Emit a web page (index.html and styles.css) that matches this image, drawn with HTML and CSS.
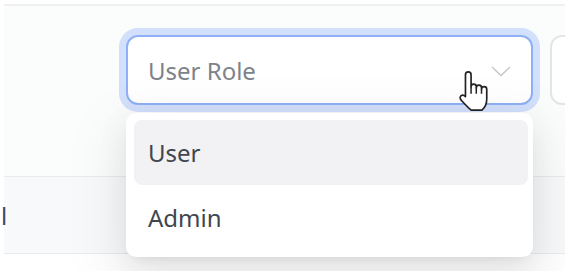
FILE: index.html
```html
<!DOCTYPE html>
<html lang="en">
<head>
    <meta charset="UTF-8">
    <meta name="viewport" content="width=device-width, initial-scale=1.0">
    <title>Users - Filter</title>
    <link rel="stylesheet" href="styles.css">
</head>
<body>
    <div class="page">
        <div class="toolbar">
            <div class="select-wrap">
                <div class="select focused">
                    <span class="placeholder">User Role</span>
                    <svg class="chevron" width="20" height="11" viewBox="0 0 20 11">
                        <path d="M1 1 L10 9.5 L19 1" fill="none" stroke="#c3c6cc" stroke-width="1.4"/>
                    </svg>
                </div>
                <div class="dropdown">
                    <div class="option active">User</div>
                    <div class="option">Admin</div>
                </div>
                <svg class="cursor" width="34" height="42" viewBox="0 0 18 22.5">
                    <path d="M5.5 11.2 V2 a1.5 1.5 0 0 1 3 0 V8.4 a1.4 1.4 0 0 1 2.8 0 V9 a1.4 1.4 0 0 1 2.8 0 V9.8 a1.4 1.4 0 0 1 2.8 0 V15 c0 2.8 -1.2 4.8 -2.6 6 H8.6 c-1.6 -1.2 -3.2 -3 -5.4 -5.4 c-0.8 -0.9 -0.7 -2 0.1 -2.5 c0.8 -0.4 1.6 0 2.2 0.6 Z" fill="#fff" stroke="#222" stroke-width="0.9" stroke-linejoin="round"/>
                    <path d="M8.5 8.4 V12.2 M11.3 9 V12.2 M14.1 9.8 V12.2" stroke="#222" stroke-width="0.8"/>
                </svg>
            </div>
            <div class="select other"></div>
        </div>
        <div class="table-head">
            <span class="col">l</span>
        </div>
    </div>
</body>
</html>
```

FILE: styles.css
```css
body {
    font-family: "Noto Sans", "Open Sans", sans-serif;
    background: #fff;
    margin: 0;
}
.page {
    padding: 4px 0 0 4px;
    overflow: hidden;
    height: 267px;
}
.toolbar {
    border-top: 2px solid #eef0f2;
    background: #fbfcfc;
    height: 172px;
    display: flex;
    align-items: flex-start;
    gap: 17px;
    padding-left: 122px;
    padding-top: 29px;
    box-sizing: border-box;
}
.select-wrap {
    position: relative;
}
.select {
    width: 407px;
    height: 70px;
    box-sizing: border-box;
    border: 2px solid #e3e5e9;
    border-radius: 12px;
    background: #fff;
    display: flex;
    align-items: center;
    padding: 0 20px;
}
.select.focused {
    border-color: #8fb0f6;
    box-shadow: 0 0 0 7px #d2e0fb;
}
.select.other {
    width: 100px;
    flex-shrink: 0;
}
.placeholder {
    font-size: 24px;
    color: #7d828b;
    flex: 1;
}
.chevron {
    margin-top: 2px;
}
.dropdown {
    position: absolute;
    top: 78px;
    left: 0;
    width: 407px;
    box-sizing: border-box;
    padding: 7px 5px 7px 8px;
    background: #fff;
    border-radius: 10px;
    box-shadow: 0 12px 32px rgba(0, 0, 0, 0.08), 0 6px 12px -8px rgba(0, 0, 0, 0.12), 0 18px 56px 16px rgba(0, 0, 0, 0.05);
    z-index: 2;
}
.option {
    height: 65px;
    display: flex;
    align-items: center;
    padding-left: 14px;
    border-radius: 8px;
    font-size: 24px;
    color: #404650;
}
.option.active {
    background: #f2f2f4;
}
.cursor {
    position: absolute;
    left: 329px;
    top: 36px;
    z-index: 3;
}
.table-head {
    height: 78px;
    box-sizing: border-box;
    border-top: 1px solid #e9ebef;
    border-bottom: 1px solid #e9ebef;
    background: #f8f9fb;
    display: flex;
    align-items: center;
}
.col {
    font-size: 24px;
    color: #3b4a6b;
    margin-left: -3px;
}
```
